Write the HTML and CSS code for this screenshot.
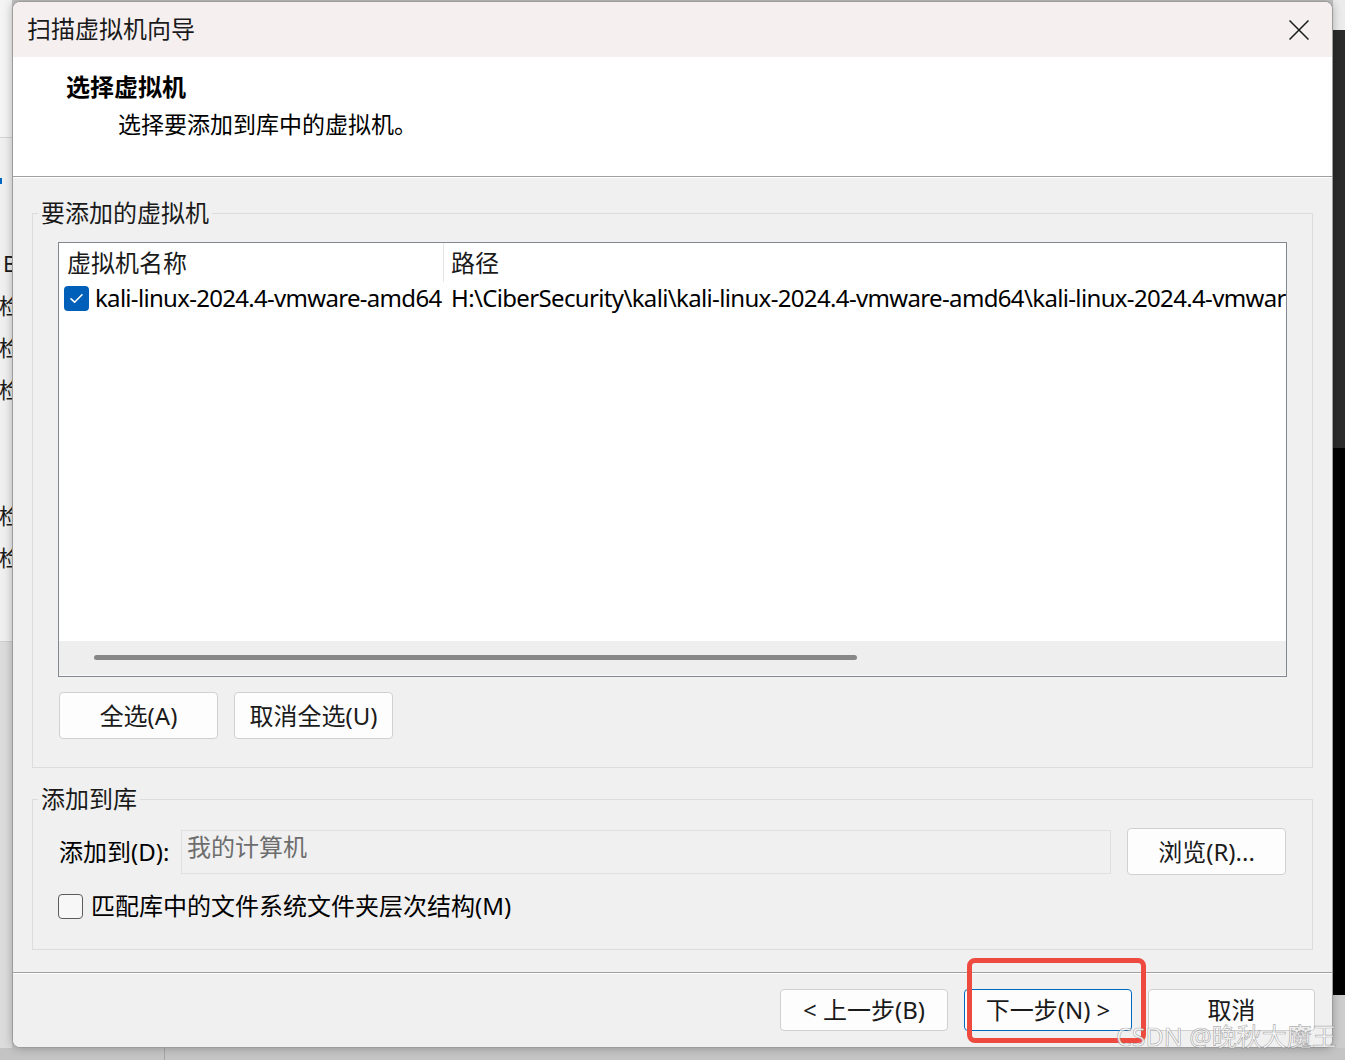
FILE: index.html
```html
<!DOCTYPE html>
<html lang="zh-CN">
<head>
<meta charset="utf-8">
<title>扫描虚拟机向导</title>
<link rel="stylesheet" href="styles.css">
</head>
<body>
<div class="desktop">
  <div class="bg-left">
    <div class="bl-top"></div>
    <div class="bl-mid">
      <span class="bl-mark"></span>
      <div class="bl-item bl-b">B</div>
      <div class="bl-item">检</div>
      <div class="bl-item">检</div>
      <div class="bl-item">检</div>
      <div class="bl-item"></div>
      <div class="bl-item"></div>
      <div class="bl-item">检</div>
      <div class="bl-item">检</div>
    </div>
    <div class="bl-bottom"></div>
  </div>
  <div class="bg-right">
    <div class="br-top"></div>
    <div class="br-dark"></div>
    <div class="br-black"></div>
    <div class="br-bottom"></div>
  </div>
  <div class="bg-bottom"><div class="bb-divider"></div></div>

  <section class="window">
    <header class="titlebar">
      <h1 class="title">扫描虚拟机向导</h1>
      <button class="close" aria-label="关闭">
        <svg width="20" height="20" viewBox="0 0 20 20"><path d="M0.5 0.5 L19.5 19.5 M19.5 0.5 L0.5 19.5" stroke="#1b1b1b" stroke-width="1.5" fill="none"/></svg>
      </button>
    </header>
    <div class="wizard-head">
      <div class="wh-title">选择虚拟机</div>
      <div class="wh-sub">选择要添加到库中的虚拟机。</div>
    </div>
    <div class="sep"></div>
    <div class="content">
      <fieldset class="group g1">
        <legend>要添加的虚拟机</legend>
        <div class="group-body">
          <div class="listview">
            <div class="lv-head">
              <div class="col c1">虚拟机名称</div>
              <div class="col c2">路径</div>
            </div>
            <div class="lv-row">
              <div class="col c1">
                <span class="cb checked">
                  <svg width="25" height="25" viewBox="0 0 25 25"><path d="M7 12.8 L10.6 16.2 L18 8.8" stroke="#fff" stroke-width="1.6" fill="none" stroke-linecap="round" stroke-linejoin="round"/></svg>
                </span>
                <span class="name">kali-linux-2024.4-vmware-amd64</span>
              </div>
              <div class="col c2 path">H:\CiberSecurity\kali\kali-linux-2024.4-vmware-amd64\kali-linux-2024.4-vmware-amd64.vmx</div>
            </div>
            <div class="lv-fill"></div>
            <div class="hscroll"><div class="thumb"></div></div>
          </div>
          <div class="btnrow">
            <button class="btn">全选(A)</button>
            <button class="btn">取消全选(U)</button>
          </div>
        </div>
      </fieldset>
      <fieldset class="group g2">
        <legend>添加到库</legend>
        <div class="group-body">
          <div class="lib-row">
            <span class="lib-label">添加到(D):</span>
            <div class="lib-input">我的计算机</div>
            <button class="btn btn-browse">浏览(R)...</button>
          </div>
          <label class="chk-row">
            <span class="cb unchecked"></span>
            <span>匹配库中的文件系统文件夹层次结构(M)</span>
          </label>
        </div>
      </fieldset>
    </div>
    <div class="sep"></div>
    <footer class="footer">
      <button class="btn fbtn">&lt; 上一步(B)</button>
      <button class="btn fbtn default">下一步(N) &gt;</button>
      <button class="btn fbtn cancel">取消</button>
    </footer>
  </section>

  <div class="annot"></div>
  <div class="watermark">CSDN @晚秋大魔王</div>
</div>
</body>
</html>
```

FILE: styles.css
```css
* { box-sizing: border-box; }
html, body { margin: 0; padding: 0; }
body {
  width: 1345px;
  height: 1060px;
  overflow: hidden;
  font-family: "Noto Sans", "Noto Sans CJK SC", sans-serif;
  font-size: 24px;
  color: #000;
  background: #c6c6c6;
}
button { font-family: inherit; font-size: inherit; color: inherit; }

.desktop {
  position: relative;
  width: 1345px;
  height: 1060px;
  overflow: hidden;
  background: #c6c6c6;
}

/* background apps */
.bg-left {
  position: absolute;
  left: 0; top: 0;
  width: 12px; height: 1060px;
  display: flex;
  flex-direction: column;
  overflow: hidden;
}
.bl-top { height: 138px; background: #f4f4f4; border-bottom: 1px solid #d4d4d4; }
.bl-mid {
  height: 503px;
  background: #f0f0f0;
  padding-top: 40px;
  display: flex;
  flex-direction: column;
}
.bl-mark { display: block; width: 2px; height: 6px; background: #0067c0; margin-bottom: 58px; }
.bl-item {
  height: 42px;
  line-height: 42px;
  font-size: 22px;
  color: #1a1a1a;
  white-space: nowrap;
  margin-left: -1px;
}
.bl-b { margin-left: 3px; }
.bl-bottom { flex: 1; background: #dcdcdc; border-top: 1px solid #cfcfcf; }

.bg-right {
  position: absolute;
  right: 0; top: 0;
  width: 12px; height: 1060px;
  display: flex;
  flex-direction: column;
}
.br-top { height: 30px; background: #ececec; }
.br-dark { height: 418px; background: #2b2b2b; }
.br-black { height: 547px; background: #000; }
.br-bottom { flex: 1; background: #cdcdcd; }

.bg-bottom {
  position: absolute;
  left: 0; top: 1048px;
  width: 1345px; height: 12px;
  background: #c4c4c4;
}
.bb-divider { margin-left: 164px; width: 1px; height: 100%; background: #a6a6a6; }

/* window */
.window {
  position: absolute;
  left: 12px; top: 1px;
  width: 1321px; height: 1047px;
  border: 1px solid #9c9c9c;
  border-radius: 8px;
  overflow: hidden;
  background: #f0f0f0;
  display: flex;
  flex-direction: column;
  box-shadow: 0 0 10px rgba(0, 0, 0, 0.28);
}
.titlebar {
  height: 55px;
  flex: none;
  background: #f5eff0;
  display: flex;
  align-items: center;
  justify-content: space-between;
  padding: 0 23px 0 14px;
}
.title {
  margin: 0 0 2px 0;
  font-size: 24px;
  font-weight: 400;
  color: #1a1a1a;
  line-height: 30px;
}
.close {
  border: 0;
  background: transparent;
  padding: 0;
  width: 20px; height: 20px;
  display: flex;
}

.wizard-head {
  height: 119px;
  flex: none;
  background: #fff;
  padding: 15px 0 0 53px;
}
.wh-title { font-weight: 700; line-height: 30px; font-size: 24px; }
.wh-sub { line-height: 30px; margin-top: 7px; padding-left: 52px; font-size: 23px; }

.sep {
  height: 2px;
  flex: none;
  border-top: 1px solid #a0a0a0;
  border-bottom: 1px solid #ffffff;
}

.content {
  flex: none;
  padding: 20px 19px 22px 19px;
  background: #f0f0f0;
}
.group {
  margin: 0;
  padding: 0;
  border: 1px solid #dcdcdc;
  min-width: 0;
}
.group legend {
  margin-left: 5px;
  padding: 0 3px;
  line-height: 30px;
  font-size: 24px;
  color: #1a1a1a;
}
.g2 { margin-top: 16px; }
.group-body { padding: 14px 25px 28px 25px; }

/* list view */
.listview {
  height: 435px;
  border: 1px solid #828790;
  background: #fff;
  display: flex;
  flex-direction: column;
}
.lv-head, .lv-row { display: flex; flex: none; }
.lv-head { height: 39px; }
.lv-head .col { line-height: 39px; color: #1a1a1a; }
.lv-head .c1 { width: 385px; padding-left: 8px; border-right: 1px solid #e5e5e5; }
.lv-head .c2 { padding-left: 7px; }
.lv-row { height: 32px; align-items: center; }
.lv-row .c1 {
  width: 385px;
  display: flex;
  align-items: center;
  padding-left: 5px;
  white-space: nowrap;
  overflow: hidden;
}
.lv-row .c2 { flex: 1; padding-left: 7px; white-space: nowrap; overflow: hidden; line-height: 32px; }
.name { margin-left: 6px; line-height: 32px; letter-spacing: -0.7px; }
.path { letter-spacing: -0.65px; }

.cb {
  display: inline-flex;
  width: 25px; height: 25px;
  border-radius: 4px;
  flex: none;
}
.cb.checked { background: #005fb8; }
.cb.unchecked { border: 1.5px solid #5c5c5c; background: #f7f7f7; }

.lv-fill { flex: 1; }
.hscroll {
  height: 35px;
  flex: none;
  background: #eeeeee;
  border-bottom: 1px solid #fafafa;
  padding: 14px 0 0 35px;
}
.thumb { width: 763px; height: 5px; border-radius: 3px; background: #878787; }

/* buttons */
.btn {
  background: #fdfdfd;
  border: 1px solid #d0d0d0;
  border-radius: 4px;
  padding: 0;
  line-height: 1;
  color: #1a1a1a;
}
.btnrow { display: flex; gap: 16px; margin-top: 15px; padding-left: 1px; }
.btnrow .btn { width: 159px; height: 47px; }

.lib-row { display: flex; align-items: center; height: 47px; }
.lib-label { width: 123px; flex: none; padding-left: 1px; line-height: 30px; }
.lib-input {
  flex: 1;
  height: 44px;
  margin-top: 1px;
  background: #f0f0f0;
  border: 1px solid #e0e0e0;
  color: #6d6d6d;
  padding: 0 0 0 5px;
  line-height: 32px;
}
.btn-browse { width: 159px; height: 47px; margin-left: 16px; flex: none; margin-right: 1px; }

.chk-row {
  display: flex;
  align-items: center;
  gap: 8px;
  height: 30px;
  margin-top: 16px;
  line-height: 30px;
}

.footer {
  flex: 1;
  display: flex;
  justify-content: flex-end;
  align-items: flex-start;
  gap: 16px;
  padding: 15px 17px 0 0;
  background: #f0f0f0;
}
.fbtn { width: 168px; height: 42px; }
.fbtn.cancel { width: 167px; }
.fbtn.default { border-color: #0067c0; }

/* overlays */
.annot {
  position: absolute;
  left: 967px; top: 958px;
  width: 179px; height: 85px;
  border: 5px solid #ee4a3f;
  border-radius: 8px;
}
.watermark {
  position: absolute;
  left: 1116px; top: 1020px;
  font-size: 25px;
  line-height: 32px;
  white-space: nowrap;
  color: rgba(255, 255, 255, 0.8);
  -webkit-text-stroke: 0.7px rgba(110, 110, 110, 0.55);
}
```
